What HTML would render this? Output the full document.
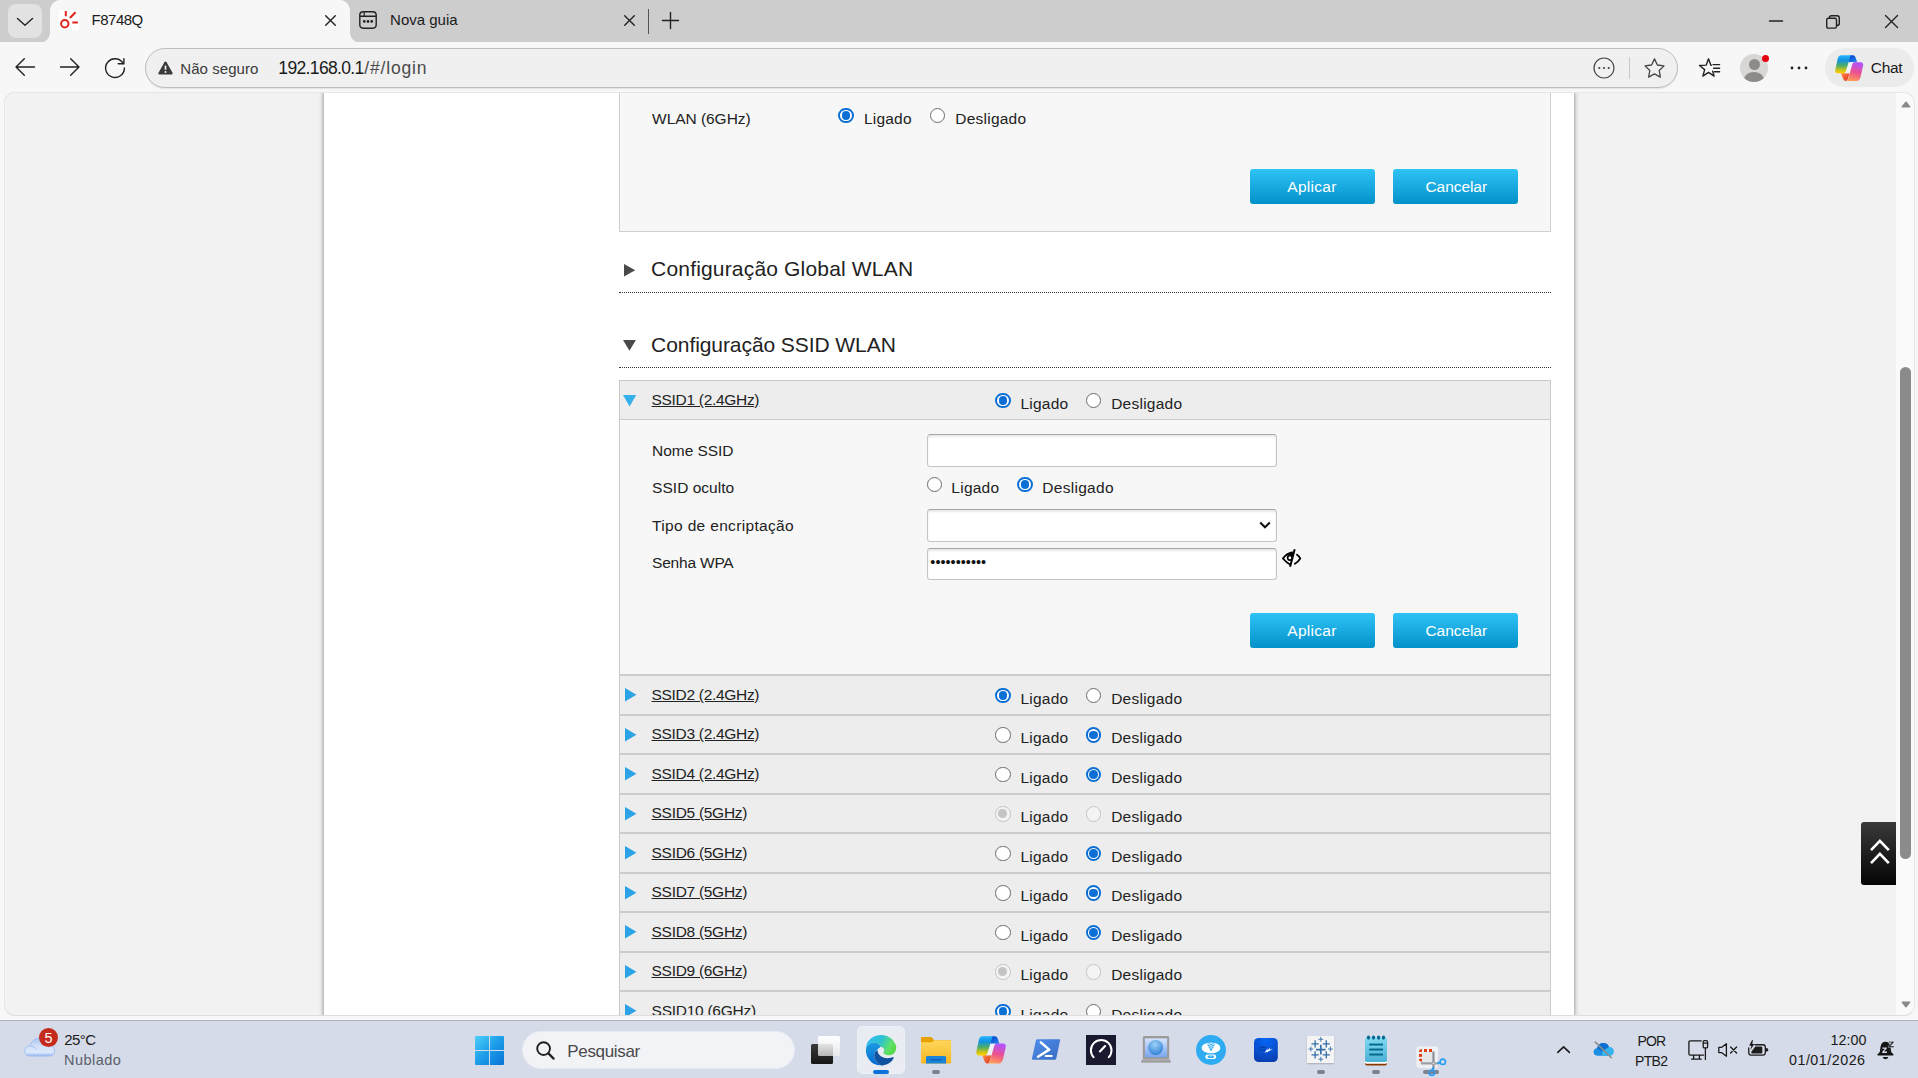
<!DOCTYPE html>
<html lang="pt-BR">
<head>
<meta charset="utf-8">
<title>F8748Q</title>
<style>
*{box-sizing:border-box;margin:0;padding:0}
html,body{width:1918px;height:1078px;overflow:hidden}
body{position:relative;background:#f7f7f7;font-family:"Liberation Sans",sans-serif;color:#222;font-size:16px}
.abs{position:absolute}
svg{position:absolute;overflow:visible}
.t{position:absolute;white-space:nowrap;line-height:1;transform-origin:0 50%}
/* ---------- browser chrome ---------- */
#tabstrip{left:0;top:0;width:1918px;height:42.7px;background:#cdcdcd}
#tabdrop{left:8px;top:4px;width:34px;height:34px;border-radius:8px;background:#e2e2e2}
#tab1{left:50px;top:0;width:300px;height:42.7px;background:#f7f7f7;border-radius:10px 10px 0 0}
#tab1:before,#tab1:after{content:"";position:absolute;bottom:0;width:10px;height:10px}
#tab1:before{left:-10px;background:radial-gradient(circle at 0 0,rgba(0,0,0,0) 9.5px,#f7f7f7 10px)}
#tab1:after{right:-10px;background:radial-gradient(circle at 100% 0,rgba(0,0,0,0) 9.5px,#f7f7f7 10px)}
#toolbar{left:0;top:42px;width:1918px;height:50px;background:#f7f7f7}
#addr{left:145px;top:48px;width:1533px;height:40px;border-radius:20px;background:#f0f0f0;border:1px solid #bdbdbd;box-shadow:0 1px 1px rgba(0,0,0,.08)}
#chat{left:1825px;top:48px;width:89px;height:39px;border-radius:20px;background:#ebebeb}
/* ---------- viewport ---------- */
#vp{left:4px;top:92px;width:1911px;height:924px;background:#f2f2f2;border-radius:11px;overflow:hidden}
#vpb{left:4px;top:92px;width:1911px;height:924px;border-radius:11px;border:1px solid #e6e6e6;border-bottom-color:#dedede}
#panel{left:320px;top:0;width:1250px;height:924px;background:#fff;box-shadow:0 0 4px 1px rgba(0,0,0,.35)}
#sbar{left:1892px;top:0;width:19px;height:924px;background:#fafafa}
#thumb{left:1896px;top:275px;width:11px;height:492px;border-radius:6px;background:#8b8b8b}
#totop{left:1857px;top:730px;width:35px;height:63px;border-radius:3px 0 0 3px;background:linear-gradient(#3a3a3a,#040404)}
/* page */
.box{background:#f7f7f7;border:1px solid #cfcfcf}
.btn{position:absolute;width:125px;height:35px;border-radius:3px;background:linear-gradient(#2fc3f7,#0391c9);color:#fff;text-align:center;line-height:35px;font-size:16px}
.row{position:absolute;left:0;width:930px;background:#ededed;border-bottom:1px solid #c9c9c9}
.radio{position:absolute;width:15.5px;height:15.5px;border-radius:50%;border:1.3px solid #6b6b6b;background:#fff}
.radio.on{border:2px solid #0b6fd6}
.radio.on:after{content:"";position:absolute;left:1.45px;top:1.45px;width:8.6px;height:8.6px;border-radius:50%;background:#0b6fd6}
.radio.dis{border:1.3px solid #c4c4c4;background:#f4f4f4}
.radio.dis.on:after{left:2.15px;top:2.15px}
.radio.dis.on:after{background:#c4c4c4}
.inp{position:absolute;width:350px;height:32px;border:1px solid #c4c4c4;border-top-color:#a6a6a6;border-radius:3.5px;background:#fff;box-shadow:inset 0 2px 2px rgba(0,0,0,.09)}
.dot{border-bottom:1px dotted #333}
/* ---------- taskbar ---------- */
#taskbar{left:0;top:1020px;width:1918px;height:58px;background:#d5dbe8;border-top:1px solid #a9aeb9}
#tbline{left:0;top:1019px;width:1918px;height:1px;background:#fdfdfd}
#search{left:522px;top:1030.6px;width:273px;height:38.6px;border-radius:19.3px;background:#f1f3f7;border:1px solid #e9ecf2}
</style>
</head>
<body>
<!-- TABSTRIP -->
<div id="tabstrip" class="abs"></div>
<div id="tabdrop" class="abs"></div>
<div id="tab1" class="abs"></div>
<div id="toolbar" class="abs"></div>
<div id="addr" class="abs"></div>
<div id="chat" class="abs"></div>
<svg style="left:17px;top:18px" width="16" height="8"><path d="M0.5 0.5 L8 7.3 L15.5 0.5" fill="none" stroke="#222" stroke-width="1.4" stroke-linecap="round" stroke-linejoin="round"/></svg>
<div class="abs" style="left:59px;top:10px;width:20px;height:20px;background:#fff"></div>
<svg style="left:59px;top:10px" width="20" height="20"><g fill="none" stroke="#e0231c" stroke-width="2"><circle cx="5.8" cy="13.7" r="3.7"/><path d="M6.8 1 V6.2 M10.9 8 L16.5 2.2 M13.3 12.5 H18.9"/></g></svg>
<div class="t " style="left:91.58px;top:12.00px;font-size:15.00px;color:#1b1b1b;letter-spacing:-0.512px;">F8748Q</div>
<svg style="left:325.2px;top:15px" width="11" height="11"><path d="M0.7 0.7 L10.3 10.3 M10.3 0.7 L0.7 10.3" fill="none" stroke="#222" stroke-width="1.4" stroke-linecap="round" stroke-linejoin="round"/></svg>
<svg style="left:359px;top:11px" width="18" height="18"><g fill="none" stroke="#222" stroke-width="1.4" stroke-linecap="round" stroke-linejoin="round" stroke-width="1.6"><rect x="0.8" y="0.8" width="16.4" height="16.4" rx="3.4"/><path d="M0.8 5.2 H17.2"/><path d="M5.2 0.8 V5.2" stroke-width="1.2"/></g><g fill="#222"><circle cx="5.3" cy="10.4" r="1.35"/><circle cx="9" cy="10.4" r="1.35"/><circle cx="12.7" cy="10.4" r="1.35"/></g></svg>
<div class="t " style="left:390.07px;top:12.00px;font-size:15.00px;color:#1b1b1b;letter-spacing:-0.002px;">Nova guia</div>
<svg style="left:624px;top:15px" width="11" height="11"><path d="M0.7 0.7 L10.3 10.3 M10.3 0.7 L0.7 10.3" fill="none" stroke="#222" stroke-width="1.4" stroke-linecap="round" stroke-linejoin="round"/></svg>
<div class="abs" style="left:648px;top:9px;width:1px;height:25px;background:#555"></div>
<svg style="left:662px;top:12px" width="17" height="17"><path d="M8.5 0.5 V16.5 M0.5 8.5 H16.5" fill="none" stroke="#222" stroke-width="1.4" stroke-linecap="round" stroke-linejoin="round"/></svg>
<svg style="left:1769px;top:20px" width="14" height="2"><path d="M0.5 1 H13.5" fill="none" stroke="#222" stroke-width="1.4" stroke-linecap="round" stroke-linejoin="round" stroke-width="1.15"/></svg>
<svg style="left:1826px;top:15px" width="14" height="14"><g fill="none" stroke="#222" stroke-width="1.4" stroke-linecap="round" stroke-linejoin="round" stroke-width="1.2"><rect x="0.7" y="3.3" width="9.8" height="9.8" rx="1.6"/><path d="M3.4 3 V2.6 Q3.4 0.7 5.4 0.7 H11 Q13.3 0.7 13.3 3 V8.6 Q13.3 10.4 11 10.5"/></g></svg>
<svg style="left:1885px;top:15px" width="13" height="13"><path d="M0.5 0.5 L12.5 12.5 M12.5 0.5 L0.5 12.5" fill="none" stroke="#222" stroke-width="1.4" stroke-linecap="round" stroke-linejoin="round" stroke-width="1.2"/></svg>
<svg style="left:15px;top:58px" width="20" height="18"><path d="M19.5 9 H1 M9.3 0.7 L1 9 L9.3 17.3" fill="none" stroke="#222" stroke-width="1.4" stroke-linecap="round" stroke-linejoin="round"/></svg>
<svg style="left:60px;top:58px" width="20" height="18"><path d="M0.5 9 H19 M10.7 0.7 L19 9 L10.7 17.3" fill="none" stroke="#222" stroke-width="1.4" stroke-linecap="round" stroke-linejoin="round"/></svg>
<svg style="left:105px;top:57px" width="21" height="22"><path d="M19.4 11 A9.4 9.4 0 1 1 18.3 6.7" fill="none" stroke="#222" stroke-width="1.4" stroke-linecap="round" stroke-linejoin="round"/><path d="M13.2 6.8 H18.9 V1.7" fill="none" stroke="#222" stroke-width="1.4" stroke-linecap="round" stroke-linejoin="round"/></svg>
<svg style="left:157.6px;top:60.6px" width="15" height="14"><path d="M7.5 0.6 Q8.2 0.6 8.6 1.3 L14.6 12 Q15 13.4 13.6 13.4 H1.4 Q0 13.4 0.4 12 L6.4 1.3 Q6.8 0.6 7.5 0.6Z" fill="#3b3b3b"/><path d="M7.5 4.6 V8.8" stroke="#f0f0f0" stroke-width="1.7"/><circle cx="7.5" cy="11" r="1" fill="#f0f0f0"/></svg>
<div class="t " style="left:180.28px;top:61.00px;font-size:15.00px;color:#3a3a3a;letter-spacing:0.068px;">Não seguro</div>
<div class="t " style="left:278.34px;top:60.00px;font-size:17.50px;color:#1a1a1a;letter-spacing:-0.648px;">192.168.0.1</div>
<div class="t " style="left:364.34px;top:60.00px;font-size:17.50px;color:#4a4a4a;letter-spacing:0.811px;">/#/login</div>
<svg style="left:1593px;top:57px" width="22" height="22"><circle cx="11" cy="11" r="10" fill="none" stroke="#444" stroke-width="1.2"/><g fill="#444"><circle cx="6.3" cy="11" r="1.1"/><circle cx="11" cy="11" r="1.1"/><circle cx="15.7" cy="11" r="1.1"/></g></svg>
<div class="abs" style="left:1629px;top:57px;width:1px;height:22px;background:#c8c8c8"></div>
<svg style="left:1644px;top:58px" width="21" height="20"><path d="M10.5 0.9 L13.4 7 L20 7.9 L15.2 12.5 L16.4 19.1 L10.5 15.9 L4.6 19.1 L5.8 12.5 L1 7.9 L7.6 7Z" fill="none" stroke="#444" stroke-width="1.3" stroke-linejoin="round"/></svg>
<svg style="left:1698.6px;top:58.4px" width="22" height="20"><path d="M12.4 7.2 L11.85 7.16 L9.5 0.8 L7.15 7.16 L0.5 7.5 L5.7 11.64 L3.86 18.1 L9.5 14.4 L15.1 18.1 L13.7 13.2" fill="none" stroke="#222" stroke-width="1.4" stroke-linecap="round" stroke-linejoin="round"/><path d="M14 6.6 H20.6 M14.6 10.2 H20.6 M15.4 13.8 H20.6" fill="none" stroke="#222" stroke-width="1.4" stroke-linecap="round" stroke-linejoin="round"/></svg>
<div class="abs" style="left:1740px;top:54px;width:28px;height:28px;border-radius:50%;background:#d9d7d5;overflow:hidden"><div class="abs" style="left:8.5px;top:4.5px;width:11px;height:11px;border-radius:50%;background:#8e8a87"></div><div class="abs" style="left:4px;top:17.5px;width:20px;height:16px;border-radius:50%;background:#8e8a87"></div></div>
<div class="abs" style="left:1761.5px;top:54.5px;width:7px;height:7px;border-radius:50%;background:#e4000f"></div>
<svg style="left:1790px;top:66px" width="18" height="4"><g fill="#222"><circle cx="2" cy="2" r="1.4"/><circle cx="9" cy="2" r="1.4"/><circle cx="16" cy="2" r="1.4"/></g></svg>
<svg style="left:1834.80px;top:54.70px" width="28.40" height="26.20" viewBox="0 0 30 27.7"><defs><linearGradient id="cls" x1="0" y1="0" x2="0" y2="1"><stop offset="0" stop-color="#25b4fb"/><stop offset=".28" stop-color="#1192e3"/><stop offset=".58" stop-color="#4fae66"/><stop offset=".85" stop-color="#d8c514"/><stop offset="1" stop-color="#ffd000"/></linearGradient><linearGradient id="crs" x1="0.35" y1="0" x2="0.1" y2="1"><stop offset="0" stop-color="#b553f5"/><stop offset=".45" stop-color="#ea5092"/><stop offset=".8" stop-color="#fb8468"/><stop offset="1" stop-color="#ffa84a"/></linearGradient><linearGradient id="cbs" x1="0" y1="0" x2="0.8" y2="1"><stop offset="0" stop-color="#0838d0"/><stop offset="1" stop-color="#1f86e8"/></linearGradient><linearGradient id="cos" x1="0" y1="0" x2="1" y2="0.8"><stop offset="0" stop-color="#ff8c3a"/><stop offset="1" stop-color="#e23a2c"/></linearGradient></defs><path d="M15.6 0.2 H19.4 Q21 0.3 21.9 3 L23.4 7.8 H14.2 Z" fill="url(#cbs)"/><path d="M6.3 19.3 H15.4 L13.4 26 Q12.6 27.8 10.8 27.5 Q9.2 27 8.6 25.2 Z" fill="url(#cos)"/><path d="M14.2 7.7 H19 L15.4 19.3 H10.4 Z" fill="#eef1f7"/><path d="M6.4 0.2 H16.7 L15.2 4.9 L11.2 17.6 Q10.6 19.4 8.6 19.4 H2.9 Q-0.4 19.2 0.3 15.8 L3 3.2 Q3.8 0.3 6.4 0.2Z" fill="url(#cls)"/><path d="M21 7.6 H27 Q30.4 7.8 29.7 11.4 L27 23.2 Q26 27.3 22.8 27.5 H12.4 Q13.4 26.8 14 25 L18.4 9.6 Q19 7.7 21 7.6Z" fill="url(#crs)"/></svg>
<div class="t " style="left:1870.77px;top:60.00px;font-size:15.50px;color:#1b1b1b;letter-spacing:-0.299px;">Chat</div>
<!-- VIEWPORT -->
<div id="vp" class="abs">
  <div id="panel" class="abs"></div>
  <div id="pg" class="abs" style="left:-4px;top:-92px;width:1918px;height:1078px">
<div class="abs box" style="left:619px;top:60px;width:932px;height:172px"></div>
<div class="t " style="left:652.07px;top:111.00px;font-size:15.50px;color:#222;letter-spacing:-0.044px;">WLAN (6GHz)</div>
<div class="radio on" style="left:838.45px;top:107.85px"></div>
<div class="t " style="left:863.97px;top:111.00px;font-size:15.50px;color:#222;letter-spacing:0.200px;">Ligado</div>
<div class="radio" style="left:929.55px;top:107.85px"></div>
<div class="t " style="left:955.27px;top:111.00px;font-size:15.50px;color:#222;letter-spacing:0.235px;">Desligado</div>
<div class="btn" style="left:1250px;top:169px"></div>
<div class="t " style="left:1287.37px;top:179.00px;font-size:15.50px;color:#fff;letter-spacing:0.267px;">Aplicar</div>
<div class="btn" style="left:1393px;top:169px"></div>
<div class="t " style="left:1425.47px;top:179.00px;font-size:15.50px;color:#fff;letter-spacing:-0.061px;">Cancelar</div>
<svg style="left:624.2px;top:264.2px" width="11.2" height="12.5"><path d="M0 0 L11.2 6.25 L0 12.5Z" fill="#4a4a4a"/></svg>
<div class="t " style="left:651.08px;top:258.00px;font-size:21.00px;color:#222;letter-spacing:0.175px;">Configuração Global WLAN</div>
<div class="abs dot" style="left:619px;top:292px;width:932px;height:1px"></div>
<svg style="left:623px;top:340.1px" width="12.9" height="10.8"><path d="M0 0 L12.9 0 L6.45 10.8Z" fill="#4a4a4a"/></svg>
<div class="t " style="left:651.08px;top:334.00px;font-size:21.00px;color:#222;letter-spacing:-0.074px;">Configuração SSID WLAN</div>
<div class="abs dot" style="left:619px;top:367px;width:932px;height:1px"></div>
<div class="abs" style="left:619px;top:380px;width:932px;height:700px;background:#ededed;border:1px solid #c9c9c9"></div>
<svg style="left:623.3px;top:394.8px" width="13.2" height="11.5"><path d="M0 0 L13.2 0 L6.6 11.5Z" fill="#35b0e8"/></svg>
<div class="t " style="left:651.57px;top:392.00px;font-size:15.50px;color:#222;letter-spacing:-0.309px;text-decoration:underline;text-underline-offset:1px;">SSID1 (2.4GHz)</div>
<div class="radio on" style="left:995.15px;top:392.85px"></div>
<div class="t " style="left:1020.47px;top:396.00px;font-size:15.50px;color:#222;letter-spacing:0.217px;">Ligado</div>
<div class="radio" style="left:1085.55px;top:392.85px"></div>
<div class="t " style="left:1111.17px;top:396.00px;font-size:15.50px;color:#222;letter-spacing:0.246px;">Desligado</div>
<div class="abs" style="left:620px;top:419px;width:930px;height:257px;background:#f7f7f7;border-top:1px solid #cbcbcb;border-bottom:2px solid #cccccc"></div>
<div class="t " style="left:652.07px;top:443.00px;font-size:15.50px;color:#222;letter-spacing:-0.043px;">Nome SSID</div>
<div class="inp" style="left:927px;top:434px;height:33px"></div>
<div class="t " style="left:652.07px;top:480.00px;font-size:15.50px;color:#222;letter-spacing:0.027px;">SSID oculto</div>
<div class="radio" style="left:926.55px;top:476.85px"></div>
<div class="t " style="left:951.37px;top:480.00px;font-size:15.50px;color:#222;letter-spacing:0.234px;">Ligado</div>
<div class="radio on" style="left:1017.25px;top:476.85px"></div>
<div class="t " style="left:1042.27px;top:480.00px;font-size:15.50px;color:#222;letter-spacing:0.290px;">Desligado</div>
<div class="t " style="left:652.07px;top:518.00px;font-size:15.50px;color:#222;letter-spacing:0.336px;">Tipo de encriptação</div>
<div class="inp" style="left:927px;top:509px;height:33px"></div>
<svg style="left:1259px;top:521px" width="12" height="8"><path d="M1.2 1.5 L6 6.3 L10.8 1.5" fill="none" stroke="#111" stroke-width="2"/></svg>
<div class="t " style="left:652.07px;top:555.00px;font-size:15.50px;color:#222;letter-spacing:-0.204px;">Senha WPA</div>
<div class="inp" style="left:927px;top:548px"></div>
<div class="t" style="left:930.3px;top:555.2px;font-size:14.4px;letter-spacing:0.04px;color:#111">•••••••••••</div>
<svg style="left:1281.9px;top:548.9px" width="19" height="18" viewBox="0 0 19 18"><g fill="none" stroke="#000" stroke-width="1.75"><path d="M10.6 3.1 Q4.6 4.4 0.9 9.5 Q4.4 13.6 8.4 15.7"/><path d="M14.4 5.2 Q17 7 18.3 9.5 Q16.2 13 12.3 15.2" stroke-width="1.7"/><path d="M12.7 0.2 L8.1 17.8" stroke-width="2"/><circle cx="7.9" cy="8.8" r="2.3" stroke-width="1.6"/></g><path d="M5.2 6.6 Q7.6 3.4 11.6 3.2 L10.6 7.4 Q8 4.6 5.2 6.6Z" fill="#000"/></svg>
<div class="btn" style="left:1250px;top:613px"></div>
<div class="t " style="left:1287.37px;top:623.00px;font-size:15.50px;color:#fff;letter-spacing:0.267px;">Aplicar</div>
<div class="btn" style="left:1393px;top:613px"></div>
<div class="t " style="left:1425.47px;top:623.00px;font-size:15.50px;color:#fff;letter-spacing:-0.061px;">Cancelar</div>
<svg style="left:625px;top:688.00px" width="11.4" height="13.4"><path d="M0 0 L11.4 6.7 L0 13.4Z" fill="#2ba3e6"/></svg>
<div class="t " style="left:651.57px;top:687.00px;font-size:15.50px;color:#222;letter-spacing:-0.309px;text-decoration:underline;text-underline-offset:1px;">SSID2 (2.4GHz)</div>
<div class="radio on" style="left:995.15px;top:687.85px"></div>
<div class="t " style="left:1020.47px;top:691.00px;font-size:15.50px;color:#222;letter-spacing:0.217px;">Ligado</div>
<div class="radio" style="left:1085.55px;top:687.85px"></div>
<div class="t " style="left:1111.17px;top:691.00px;font-size:15.50px;color:#222;letter-spacing:0.246px;">Desligado</div>
<div class="abs" style="left:620px;top:714px;width:930px;height:2px;background:#cccccc"></div>
<svg style="left:625px;top:727.50px" width="11.4" height="13.4"><path d="M0 0 L11.4 6.7 L0 13.4Z" fill="#2ba3e6"/></svg>
<div class="t " style="left:651.57px;top:726.00px;font-size:15.50px;color:#222;letter-spacing:-0.309px;text-decoration:underline;text-underline-offset:1px;">SSID3 (2.4GHz)</div>
<div class="radio" style="left:995.15px;top:727.35px"></div>
<div class="t " style="left:1020.47px;top:730.00px;font-size:15.50px;color:#222;letter-spacing:0.217px;">Ligado</div>
<div class="radio on" style="left:1085.55px;top:727.35px"></div>
<div class="t " style="left:1111.17px;top:730.00px;font-size:15.50px;color:#222;letter-spacing:0.246px;">Desligado</div>
<div class="abs" style="left:620px;top:753px;width:930px;height:2px;background:#cccccc"></div>
<svg style="left:625px;top:767.00px" width="11.4" height="13.4"><path d="M0 0 L11.4 6.7 L0 13.4Z" fill="#2ba3e6"/></svg>
<div class="t " style="left:651.57px;top:766.00px;font-size:15.50px;color:#222;letter-spacing:-0.309px;text-decoration:underline;text-underline-offset:1px;">SSID4 (2.4GHz)</div>
<div class="radio" style="left:995.15px;top:766.85px"></div>
<div class="t " style="left:1020.47px;top:770.00px;font-size:15.50px;color:#222;letter-spacing:0.217px;">Ligado</div>
<div class="radio on" style="left:1085.55px;top:766.85px"></div>
<div class="t " style="left:1111.17px;top:770.00px;font-size:15.50px;color:#222;letter-spacing:0.246px;">Desligado</div>
<div class="abs" style="left:620px;top:793px;width:930px;height:2px;background:#cccccc"></div>
<svg style="left:625px;top:806.50px" width="11.4" height="13.4"><path d="M0 0 L11.4 6.7 L0 13.4Z" fill="#2ba3e6"/></svg>
<div class="t " style="left:651.57px;top:805.00px;font-size:15.50px;color:#222;letter-spacing:-0.292px;text-decoration:underline;text-underline-offset:1px;">SSID5 (5GHz)</div>
<div class="radio on dis" style="left:995.15px;top:806.35px"></div>
<div class="t " style="left:1020.47px;top:809.00px;font-size:15.50px;color:#222;letter-spacing:0.217px;">Ligado</div>
<div class="radio dis" style="left:1085.55px;top:806.35px"></div>
<div class="t " style="left:1111.17px;top:809.00px;font-size:15.50px;color:#222;letter-spacing:0.246px;">Desligado</div>
<div class="abs" style="left:620px;top:832px;width:930px;height:2px;background:#cccccc"></div>
<svg style="left:625px;top:846.00px" width="11.4" height="13.4"><path d="M0 0 L11.4 6.7 L0 13.4Z" fill="#2ba3e6"/></svg>
<div class="t " style="left:651.57px;top:845.00px;font-size:15.50px;color:#222;letter-spacing:-0.292px;text-decoration:underline;text-underline-offset:1px;">SSID6 (5GHz)</div>
<div class="radio" style="left:995.15px;top:845.85px"></div>
<div class="t " style="left:1020.47px;top:849.00px;font-size:15.50px;color:#222;letter-spacing:0.217px;">Ligado</div>
<div class="radio on" style="left:1085.55px;top:845.85px"></div>
<div class="t " style="left:1111.17px;top:849.00px;font-size:15.50px;color:#222;letter-spacing:0.246px;">Desligado</div>
<div class="abs" style="left:620px;top:872px;width:930px;height:2px;background:#cccccc"></div>
<svg style="left:625px;top:885.50px" width="11.4" height="13.4"><path d="M0 0 L11.4 6.7 L0 13.4Z" fill="#2ba3e6"/></svg>
<div class="t " style="left:651.57px;top:884.00px;font-size:15.50px;color:#222;letter-spacing:-0.292px;text-decoration:underline;text-underline-offset:1px;">SSID7 (5GHz)</div>
<div class="radio" style="left:995.15px;top:885.35px"></div>
<div class="t " style="left:1020.47px;top:888.00px;font-size:15.50px;color:#222;letter-spacing:0.217px;">Ligado</div>
<div class="radio on" style="left:1085.55px;top:885.35px"></div>
<div class="t " style="left:1111.17px;top:888.00px;font-size:15.50px;color:#222;letter-spacing:0.246px;">Desligado</div>
<div class="abs" style="left:620px;top:911px;width:930px;height:2px;background:#cccccc"></div>
<svg style="left:625px;top:925.00px" width="11.4" height="13.4"><path d="M0 0 L11.4 6.7 L0 13.4Z" fill="#2ba3e6"/></svg>
<div class="t " style="left:651.57px;top:924.00px;font-size:15.50px;color:#222;letter-spacing:-0.292px;text-decoration:underline;text-underline-offset:1px;">SSID8 (5GHz)</div>
<div class="radio" style="left:995.15px;top:924.85px"></div>
<div class="t " style="left:1020.47px;top:928.00px;font-size:15.50px;color:#222;letter-spacing:0.217px;">Ligado</div>
<div class="radio on" style="left:1085.55px;top:924.85px"></div>
<div class="t " style="left:1111.17px;top:928.00px;font-size:15.50px;color:#222;letter-spacing:0.246px;">Desligado</div>
<div class="abs" style="left:620px;top:951px;width:930px;height:2px;background:#cccccc"></div>
<svg style="left:625px;top:964.50px" width="11.4" height="13.4"><path d="M0 0 L11.4 6.7 L0 13.4Z" fill="#2ba3e6"/></svg>
<div class="t " style="left:651.57px;top:963.00px;font-size:15.50px;color:#222;letter-spacing:-0.292px;text-decoration:underline;text-underline-offset:1px;">SSID9 (6GHz)</div>
<div class="radio on dis" style="left:995.15px;top:964.35px"></div>
<div class="t " style="left:1020.47px;top:967.00px;font-size:15.50px;color:#222;letter-spacing:0.217px;">Ligado</div>
<div class="radio dis" style="left:1085.55px;top:964.35px"></div>
<div class="t " style="left:1111.17px;top:967.00px;font-size:15.50px;color:#222;letter-spacing:0.246px;">Desligado</div>
<div class="abs" style="left:620px;top:990px;width:930px;height:2px;background:#cccccc"></div>
<svg style="left:625px;top:1004.00px" width="11.4" height="13.4"><path d="M0 0 L11.4 6.7 L0 13.4Z" fill="#2ba3e6"/></svg>
<div class="t " style="left:651.57px;top:1003.00px;font-size:15.50px;color:#222;letter-spacing:-0.263px;text-decoration:underline;text-underline-offset:1px;">SSID10 (6GHz)</div>
<div class="radio on" style="left:995.15px;top:1003.85px"></div>
<div class="t " style="left:1020.47px;top:1007.00px;font-size:15.50px;color:#222;letter-spacing:0.217px;">Ligado</div>
<div class="radio" style="left:1085.55px;top:1003.85px"></div>
<div class="t " style="left:1111.17px;top:1007.00px;font-size:15.50px;color:#222;letter-spacing:0.246px;">Desligado</div>
</div>
  <div id="totop" class="abs"><svg style="left:9px;top:17px" width="20" height="26"><path d="M1 11.2 L9.9 1.8 L18.8 11.2 M1 24.2 L9.9 14.8 L18.8 24.2" fill="none" stroke="#fff" stroke-width="2.6"/></svg></div>
  <div id="sbar" class="abs"></div>
  <div id="thumb" class="abs"></div>
  <svg style="left:1897px;top:9px" width="10" height="7"><path d="M5 0.6 Q5.6 0.6 6 1.2 L9.4 5.4 Q9.8 6.6 8.6 6.6 H1.4 Q0.2 6.6 0.6 5.4 L4 1.2 Q4.4 0.6 5 0.6Z" fill="#8b8b8b"/></svg>
  <svg style="left:1897px;top:909px" width="10" height="7"><path d="M5 6.4 Q5.6 6.4 6 5.8 L9.4 1.6 Q9.8 0.4 8.6 0.4 H1.4 Q0.2 0.4 0.6 1.6 L4 5.8 Q4.4 6.4 5 6.4Z" fill="#8b8b8b"/></svg>
</div>
<div id="vpb" class="abs"></div>
<!-- TASKBAR -->
<div id="tbline" class="abs"></div>
<div id="taskbar" class="abs"></div>
<div id="search" class="abs"></div>
<svg style="left:24px;top:1037px" width="32" height="20" viewBox="0 0 32 20"><defs><linearGradient id="wc" x1="0" y1="0" x2="0" y2="1"><stop offset="0" stop-color="#a6c4f4"/><stop offset=".45" stop-color="#d3e2f9"/><stop offset=".8" stop-color="#dbe8fb"/><stop offset="1" stop-color="#94b5ef"/></linearGradient></defs><path d="M6.5 19.1 Q0.8 19.1 0.8 13.8 Q1 8.8 6.3 8.6 Q8.6 0.8 16.5 0.9 Q23.5 1.2 25.4 8.2 Q30.5 8.8 30.6 13.8 Q30.4 19 25 19.1Z" fill="url(#wc)" stroke="#9dbbf1" stroke-width="0.9"/><path d="M6.4 9.2 Q10.6 9 12.4 12.4" fill="none" stroke="#9dbbf1" stroke-width="0.9"/></svg>
<div class="abs" style="left:38.5px;top:1027.9px;width:19.4px;height:19.4px;border-radius:50%;background:#c42b1c"></div>
<div class="t " style="left:44.48px;top:1031.00px;font-size:14.50px;color:#fff;letter-spacing:-0.656px;">5</div>
<div class="t " style="left:64.18px;top:1032.00px;font-size:15.00px;color:#1a1a1a;letter-spacing:-0.572px;">25°C</div>
<div class="t " style="left:64.08px;top:1053.00px;font-size:14.50px;color:#5b606b;letter-spacing:0.471px;">Nublado</div>
<svg style="left:475px;top:1036px" width="29" height="29"><defs><linearGradient id="wl" x1="0" y1="0" x2="1" y2="1"><stop offset="0" stop-color="#4fd0fb"/><stop offset=".5" stop-color="#1b9ce8"/><stop offset="1" stop-color="#0a74d6"/></linearGradient></defs><path d="M1 0 H14 V14 H0 V1 Q0 0 1 0Z M15 0 H28 Q29 0 29 1 V14 H15Z M0 15 H14 V29 H1 Q0 29 0 28Z M15 15 H29 V28 Q29 29 28 29 H15Z" fill="url(#wl)"/></svg>
<svg style="left:535.5px;top:1040.5px" width="19" height="19"><circle cx="7.6" cy="7.6" r="6.4" fill="none" stroke="#1f1f1f" stroke-width="1.9"/><path d="M12.4 12.4 L17.6 17.6" stroke="#1f1f1f" stroke-width="2.2" stroke-linecap="round"/></svg>
<div class="t " style="left:567.25px;top:1043.00px;font-size:17.00px;color:#4a4a4a;letter-spacing:-0.322px;">Pesquisar</div>
<div class="abs" style="left:810.8px;top:1043.9px;width:22.1px;height:19.8px;border-radius:1.5px;background:linear-gradient(#3a3a3a,#161616)"></div>
<div class="abs" style="left:817.9px;top:1036.2px;width:22.1px;height:19.6px;border-radius:1.5px;background:linear-gradient(rgba(255,255,255,.98),rgba(238,238,238,.72))"></div>
<div class="abs" style="left:856.7px;top:1025.8px;width:48.2px;height:48.7px;border-radius:5px;background:#e9edf3;border:1px solid #eef1f6"></div>
<svg style="left:865.9px;top:1034.6px" width="30.3" height="30.4" viewBox="0 0 30.3 30.4"><defs><linearGradient id="eg1" x1="0" y1="0.2" x2="1" y2="0.6"><stop offset="0" stop-color="#35b8f5"/><stop offset=".45" stop-color="#2cc3d0"/><stop offset=".8" stop-color="#5fe06a"/><stop offset="1" stop-color="#55d848"/></linearGradient><linearGradient id="eg2" x1="0.3" y1="0" x2="0.5" y2="1"><stop offset="0" stop-color="#1b9de2"/><stop offset="1" stop-color="#0669d4"/></linearGradient></defs><path d="M0.19 12.80 C0.00 12.49 0.65 9.18 1.48 7.61 C2.32 6.03 3.77 4.48 5.19 3.34 C6.62 2.20 8.35 1.30 10.02 0.74 C11.69 0.19 13.42 -0.03 15.21 0.00 C17.01 0.03 18.99 0.22 20.78 0.93 C22.57 1.64 24.55 2.91 25.97 4.27 C27.40 5.63 28.60 7.61 29.31 9.09 C30.02 10.58 30.36 11.75 30.24 13.17 C30.12 14.59 29.22 16.57 28.57 17.63 C27.92 18.68 27.15 19.05 26.35 19.48 C25.54 19.91 24.86 20.19 23.75 20.22 C22.63 20.25 20.78 20.04 19.67 19.67 C18.55 19.29 17.50 18.27 17.07 18.00 C16.64 17.72 16.88 18.43 17.07 18.00 C17.25 17.56 18.18 16.26 18.18 15.40 C18.18 14.53 17.63 13.42 17.07 12.80 C16.51 12.18 15.21 11.87 14.84 11.69 C14.47 11.50 15.34 12.18 14.84 11.69 C14.35 11.19 13.17 9.40 11.87 8.72 C10.58 8.04 8.60 7.48 7.05 7.61 C5.50 7.73 3.74 8.60 2.60 9.46 C1.45 10.33 0.37 13.11 0.19 12.80Z" fill="url(#eg1)"/><path d="M0.19 12.80 C0.22 12.06 -0.22 13.36 0.19 12.80 C0.59 12.24 1.45 10.33 2.60 9.46 C3.74 8.60 5.50 7.73 7.05 7.61 C8.60 7.48 10.58 8.04 11.87 8.72 C13.17 9.40 14.35 11.19 14.84 11.69 C15.34 12.18 15.34 11.32 14.84 11.69 C14.35 12.06 12.86 12.93 11.87 13.91 C10.88 14.90 9.49 16.26 8.91 17.63 C8.32 18.99 8.04 20.53 8.35 22.08 C8.66 23.62 9.68 25.54 10.76 26.90 C11.84 28.26 14.16 29.68 14.84 30.24 C15.52 30.80 15.58 30.33 14.84 30.24 C14.10 30.15 12.00 30.24 10.39 29.68 C8.78 29.13 6.68 28.17 5.19 26.90 C3.71 25.63 2.35 23.69 1.48 22.08 C0.62 20.47 0.22 18.80 0.00 17.25 C-0.22 15.71 0.15 13.54 0.19 12.80Z" fill="url(#eg2)"/><path d="M11.50 14.66 C11.94 14.16 11.38 14.04 11.50 14.66 C11.63 15.28 11.69 17.25 12.24 18.37 C12.80 19.48 13.67 20.56 14.84 21.34 C16.02 22.11 17.81 22.73 19.29 23.01 C20.78 23.28 22.51 23.13 23.75 23.01 C24.98 22.88 26.00 22.29 26.72 22.26 C27.43 22.23 27.80 22.73 28.01 22.82 C28.23 22.91 28.42 22.26 28.01 22.82 C27.61 23.38 26.69 25.11 25.60 26.16 C24.52 27.21 22.94 28.42 21.52 29.13 C20.10 29.84 18.18 30.24 17.07 30.43 C15.96 30.61 15.89 30.83 14.84 30.24 C13.79 29.65 11.84 28.26 10.76 26.90 C9.68 25.54 8.66 23.62 8.35 22.08 C8.04 20.53 8.38 18.86 8.91 17.63 C9.43 16.39 11.07 15.15 11.50 14.66Z" fill="#10539e"/></svg>
<div class="abs" style="left:872.6px;top:1070.2px;width:16.8px;height:3.7px;border-radius:2px;background:#0a72d8"></div>
<svg style="left:920.9px;top:1036.8px" width="30.1" height="26.6" viewBox="0 0 30.1 26.6"><defs><linearGradient id="fg" x1="0" y1="0" x2="0" y2="1"><stop offset="0" stop-color="#ffd75e"/><stop offset="1" stop-color="#f7b61f"/></linearGradient></defs><path d="M1 0 H9.6 Q10.6 0 11.4 0.9 L13 3 H29 Q30.1 3 30.1 4 V8 H0 V1 Q0 0 1 0Z" fill="#e6a100"/><path d="M0 5.2 H11 L13.2 3.2 H29 Q30.1 3.2 30.1 4.2 V25.6 Q30.1 26.6 29 26.6 H1 Q0 26.6 0 25.6Z" fill="url(#fg)"/><path d="M5 26.6 V20.6 Q5 19 6.6 19 H23.5 Q25.1 19 25.1 20.6 V26.6Z" fill="#1784d9"/><path d="M9 22.7 H21.2" stroke="#0f5fb0" stroke-width="1.3"/></svg>
<div class="abs" style="left:931.9px;top:1070.2px;width:8.1px;height:3.7px;border-radius:2px;background:#7d828c"></div>
<svg style="left:976.00px;top:1035.60px" width="30.00" height="27.70" viewBox="0 0 30 27.7"><defs><linearGradient id="clb" x1="0" y1="0" x2="0" y2="1"><stop offset="0" stop-color="#25b4fb"/><stop offset=".28" stop-color="#1192e3"/><stop offset=".58" stop-color="#4fae66"/><stop offset=".85" stop-color="#d8c514"/><stop offset="1" stop-color="#ffd000"/></linearGradient><linearGradient id="crb" x1="0.35" y1="0" x2="0.1" y2="1"><stop offset="0" stop-color="#b553f5"/><stop offset=".45" stop-color="#ea5092"/><stop offset=".8" stop-color="#fb8468"/><stop offset="1" stop-color="#ffa84a"/></linearGradient><linearGradient id="cbb" x1="0" y1="0" x2="0.8" y2="1"><stop offset="0" stop-color="#0838d0"/><stop offset="1" stop-color="#1f86e8"/></linearGradient><linearGradient id="cob" x1="0" y1="0" x2="1" y2="0.8"><stop offset="0" stop-color="#ff8c3a"/><stop offset="1" stop-color="#e23a2c"/></linearGradient></defs><path d="M15.6 0.2 H19.4 Q21 0.3 21.9 3 L23.4 7.8 H14.2 Z" fill="url(#cbb)"/><path d="M6.3 19.3 H15.4 L13.4 26 Q12.6 27.8 10.8 27.5 Q9.2 27 8.6 25.2 Z" fill="url(#cob)"/><path d="M14.2 7.7 H19 L15.4 19.3 H10.4 Z" fill="#eef1f7"/><path d="M6.4 0.2 H16.7 L15.2 4.9 L11.2 17.6 Q10.6 19.4 8.6 19.4 H2.9 Q-0.4 19.2 0.3 15.8 L3 3.2 Q3.8 0.3 6.4 0.2Z" fill="url(#clb)"/><path d="M21 7.6 H27 Q30.4 7.8 29.7 11.4 L27 23.2 Q26 27.3 22.8 27.5 H12.4 Q13.4 26.8 14 25 L18.4 9.6 Q19 7.7 21 7.6Z" fill="url(#crb)"/></svg>
<svg style="left:1031px;top:1039px" width="30" height="21" viewBox="0 0 30 21"><defs><linearGradient id="ps" x1="0" y1="0" x2="1" y2="1"><stop offset="0" stop-color="#4f8feb"/><stop offset="1" stop-color="#376ac2"/></linearGradient></defs><path d="M6.4 0.2 H28.4 Q29.4 0.2 29.1 1.2 L25.2 19.8 Q25 20.7 24 20.7 H1.6 Q0.6 20.7 0.9 19.7 L5 1.1 Q5.2 0.2 6.4 0.2Z" fill="url(#ps)"/><path d="M9.8 3.4 L18.2 10.6 L7 17.8" fill="none" stroke="#fff" stroke-width="2.5" stroke-linecap="round" stroke-linejoin="round"/><path d="M14.7 17.1 H20.8" stroke="#fff" stroke-width="2" stroke-linecap="round"/></svg>
<div class="abs" style="left:1085.9px;top:1035.2px;width:30.1px;height:29.8px;background:#191a30"></div>
<svg style="left:1085.9px;top:1035.2px" width="30.1" height="29.8"><path d="M7.6 22.2 A10.3 10.3 0 1 1 22.8 22.2" fill="none" stroke="#fff" stroke-width="2" stroke-linecap="round"/><path d="M13.9 16.4 L19.1 11.1" stroke="#fff" stroke-width="2.2" stroke-linecap="round"/></svg>
<svg style="left:1141px;top:1036px" width="30" height="27" viewBox="0 0 30 27"><defs><linearGradient id="ls" x1="0" y1="0" x2="0" y2="1"><stop offset="0" stop-color="#d4e3ff"/><stop offset="1" stop-color="#78a6ee"/></linearGradient><radialGradient id="lg" cx="0.45" cy="0.3" r="0.7"><stop offset="0" stop-color="#9fd2f8"/><stop offset="1" stop-color="#3380d6"/></radialGradient><linearGradient id="lb" x1="0" y1="0" x2="0" y2="1"><stop offset="0" stop-color="#b5b5b5"/><stop offset="1" stop-color="#8e8e8e"/></linearGradient></defs><rect x="1.8" y="0.1" width="26.4" height="23.6" rx="1.6" fill="#9b9b9b"/><rect x="3.9" y="2.4" width="22.2" height="18.8" fill="url(#ls)"/><path d="M1 23.2 H29 L29.8 25.4 Q30 26.6 28.8 26.6 H1.2 Q0 26.6 0.2 25.4Z" fill="url(#lb)"/><circle cx="14.6" cy="11.5" r="7.5" fill="url(#lg)"/></svg>
<svg style="left:1195.9px;top:1035px" width="30" height="30" viewBox="0 0 30 30"><circle cx="15" cy="15" r="15" fill="#2fabf1"/><ellipse cx="15" cy="12.9" rx="9.4" ry="5.4" fill="#fff"/><path d="M11 9.2 Q15 6.4 19 9.2 L15 16.6Z" fill="#2fabf1"/><path d="M11.6 9.6 Q15 7.4 18.4 9.6 M12.6 11.4 Q15 9.9 17.4 11.4 M13.6 13.2 Q15 12.3 16.4 13.2" fill="none" stroke="#fff" stroke-width="0.9"/><rect x="9.3" y="19.4" width="10.9" height="4.6" rx="2.3" fill="#fff"/><rect x="11.6" y="20.5" width="6.3" height="2.4" rx="1.2" fill="#2fabf1"/><path d="M13.4 20.9 L16 21.7 L14.6 22.1Z" fill="#fff"/></svg>
<svg style="left:1254.2px;top:1037.8px" width="23.8" height="24" viewBox="0 0 23.8 24"><defs><radialGradient id="bq" cx="0.5" cy="0.1" r="0.9"><stop offset="0" stop-color="#0566f6"/><stop offset="1" stop-color="#0a3fb2"/></radialGradient></defs><rect width="23.8" height="24" rx="4.6" fill="url(#bq)"/><path d="M5 10.6 Q8.4 8 11.8 10 M6.2 12.8 Q8.6 11 11 12.4" fill="none" stroke="#083a9c" stroke-width="1.1"/><path d="M10.4 15 L13.8 10 L13.2 12.4 L16.6 9.4 L15.6 11.8 L19.2 10.8 L14.6 13.6 L15.4 12.6 L12.6 14.8 L13.2 13.4Z" fill="#fff"/></svg>
<div class="abs" style="left:1306.6px;top:1035.7px;width:27.6px;height:27.7px;background:#f4f4f4;box-shadow:0 1px 1.5px rgba(0,0,0,.22)"></div>
<svg style="left:1306.6px;top:1035.7px" width="27.6" height="27.7"><g stroke="#336fab" fill="none"><path d="M9.0 13.6 H18.6 M13.8 8.8 V18.4" stroke-width="1.7"/><path d="M4.5 7.8 H11.7 M8.1 4.2 V11.4" stroke-width="1.3"/><path d="M15.7 7.8 H22.9 M19.3 4.2 V11.4" stroke-width="1.3"/><path d="M4.5 18.9 H11.7 M8.1 15.3 V22.5" stroke-width="1.3"/><path d="M15.7 18.9 H22.9 M19.3 15.3 V22.5" stroke-width="1.3"/><path d="M11.4 3.3 H16.2 M13.8 0.9 V5.7" stroke-width="0.9"/><path d="M11.4 23.2 H16.2 M13.8 20.8 V25.6" stroke-width="0.9"/><path d="M1.5 13.0 H6.3 M3.9 10.6 V15.4" stroke-width="0.9"/><path d="M21.0 13.0 H25.8 M23.4 10.6 V15.4" stroke-width="0.9"/></g></svg>
<div class="abs" style="left:1316.9px;top:1070.2px;width:8.0px;height:3.7px;border-radius:2px;background:#7d828c"></div>
<svg style="left:1364px;top:1034.5px" width="24" height="31" viewBox="0 0 24 31"><defs><linearGradient id="np" x1="0" y1="0" x2="0" y2="1"><stop offset="0" stop-color="#82d8f1"/><stop offset="1" stop-color="#49b1d6"/></linearGradient></defs><path d="M1 27 H23 V28.4 Q23 30.4 21 30.4 H3 Q1 30.4 1 28.4Z" fill="#8a3a00"/><path d="M1 26 H23 V27.2 Q23 28.8 21.4 28.8 H2.6 Q1 28.8 1 27.2Z" fill="#fff"/><rect x="1" y="2.6" width="22" height="24.4" rx="1.8" fill="url(#np)"/><g fill="#00688c"><ellipse cx="4.5" cy="2.6" rx="1.6" ry="2.1"/><ellipse cx="9.5" cy="2.6" rx="1.6" ry="2.1"/><ellipse cx="14.6" cy="2.6" rx="1.6" ry="2.1"/><ellipse cx="19.5" cy="2.6" rx="1.6" ry="2.1"/><rect x="5.2" y="8.6" width="13.8" height="1.9"/><rect x="5.2" y="13.6" width="13.8" height="1.9"/><rect x="5.2" y="18.6" width="13.8" height="1.9"/></g></svg>
<div class="abs" style="left:1372.0px;top:1070.2px;width:8.0px;height:3.7px;border-radius:2px;background:#7d828c"></div>
<div class="abs" style="left:1423.0px;top:1070.2px;width:15.7px;height:3.7px;border-radius:2px;background:#7d828c"></div>
<svg style="left:1416px;top:1046px" width="32" height="30" viewBox="0 0 32 30"><rect x="0.4" y="0.3" width="21.6" height="21.6" rx="3" fill="#eef0f3"/><rect x="6" y="6" width="11" height="12" fill="#e6e7e9"/><g fill="#e23c14"><path d="M3 6 Q3 3 6 3 V6Z"/><rect x="8" y="3" width="3" height="3"/><rect x="13" y="3" width="3" height="3"/><rect x="3" y="7.9" width="3" height="3"/><path d="M3 12.7 H6 V15.7 Q3 15.7 3 12.7Z"/></g><path d="M17.5 6.4 V21.5" stroke="#8b9199" stroke-width="2.2" stroke-linecap="round"/><path d="M5.8 17.4 H21.5" stroke="#9aa0a8" stroke-width="2.2" stroke-linecap="round"/><circle cx="17.5" cy="17.4" r="0.8" fill="#dfe2e6"/><path d="M21.5 17.4 L23.6 16.6 M17.5 21.5 L16.6 23.8" stroke="#2a9df4" stroke-width="2.2"/><circle cx="26.8" cy="15.8" r="2.7" fill="none" stroke="#2a9df4" stroke-width="1.6"/><circle cx="15.8" cy="26.7" r="2.7" fill="none" stroke="#2a9df4" stroke-width="1.6"/></svg>
<svg style="left:1556.5px;top:1046px" width="13.2" height="7.2"><path d="M0.8 6.4 L6.6 0.8 L12.4 6.4" fill="none" stroke="#1a1a1a" stroke-linecap="round" stroke-linejoin="round" stroke-width="1.6"/></svg>
<svg style="left:1592.5px;top:1041px" width="21" height="18" viewBox="0 0 21 18"><path d="M5 14.8 Q0.6 14.6 0.6 10.8 Q0.8 7.6 4 7.2 Q5.4 2 10.6 2 Q14.6 2.2 16 6 Q20.6 6.4 20.6 10.6 Q20.4 14.6 16.4 14.8Z" fill="#1b8fe3"/><path d="M4 7.2 Q5.4 2 10.6 2 Q14.6 2.2 16 6 L9 10.4Z" fill="#0c6fcf"/><path d="M9 10.4 L16 6 Q20.6 6.4 20.6 10.6 Q20.4 14.6 16.4 14.8 H9Z" fill="#35b4f0"/><path d="M1.8 0.6 L18.8 17.2" stroke="#8c8c8c" stroke-width="1.5"/></svg>
<div class="t " style="left:1637.39px;top:1034.00px;font-size:14.00px;color:#1a1a1a;letter-spacing:-0.783px;">POR</div>
<div class="t " style="left:1635.09px;top:1054.00px;font-size:14.00px;color:#1a1a1a;letter-spacing:-0.706px;">PTB2</div>
<svg style="left:1688px;top:1040px" width="21" height="20"><g fill="none" stroke="#1a1a1a" stroke-linecap="round" stroke-linejoin="round" stroke-width="1.3"><path d="M13.2 0.9 H2.2 Q0.9 0.9 0.9 2.2 V13.8 Q0.9 15.1 2.2 15.1 H15.6"/><path d="M5.6 15.3 V18.7 M11.4 15.3 V18.7 M3.6 19.2 H13.2"/><rect x="15.2" y="0.7" width="4.4" height="7.2" rx="1.2"/><path d="M15.4 3.2 H19.4 M17.4 8 V19.4"/></g></svg>
<svg style="left:1717.6px;top:1043px" width="20" height="14"><g fill="none" stroke="#1a1a1a" stroke-linecap="round" stroke-linejoin="round" stroke-width="1.3"><path d="M0.8 4.4 H3.4 L8.4 0.7 V13.3 L3.4 9.6 H0.8Z"/><path d="M12.6 4 L18.6 10 M18.6 4 L12.6 10"/></g></svg>
<svg style="left:1747.6px;top:1040px" width="21" height="17"><path d="M6.9 4.75 H14.9 Q17.3 4.75 17.3 7.1 V12.8 Q17.3 15.15 14.9 15.15 H3.1 Q0.75 15.15 0.75 12.8 V8" fill="none" stroke="#1a1a1a" stroke-linecap="round" stroke-linejoin="round" stroke-width="1.3"/><path d="M17.9 8 Q20.4 8.2 20.4 9.9 Q20.4 11.6 17.9 11.8Z" fill="#1a1a1a"/><path d="M7.3 6.6 H13.3 Q14.3 6.6 14.3 7.5 V12.5 Q14.3 13.4 13.3 13.4 H4.1 Q3.2 13.4 3.2 12.5 V12 Z" fill="#1c1c1c"/><path d="M4.1 0 L1.2 5.8 H3.4 L2.4 10 L6.3 4 H4.3 L4.9 0Z" fill="#1a1a1a"/></svg>
<div class="t " style="left:1830.49px;top:1033.00px;font-size:14.30px;color:#1a1a1a;letter-spacing:0.064px;">12:00</div>
<div class="t " style="left:1788.99px;top:1053.00px;font-size:14.30px;color:#1a1a1a;letter-spacing:0.504px;">01/01/2026</div>
<svg style="left:1876.5px;top:1041px" width="18" height="19" viewBox="0 0 18 19"><path d="M8.4 0.8 Q12.6 0.9 13.4 5.4 L14.2 11 L16.6 13.6 Q16.8 14.6 15.8 14.6 H1.2 Q0.2 14.6 0.4 13.6 L2.8 11 L3.6 5.4 Q4.4 0.9 8.4 0.8Z" fill="#141414"/><path d="M5.6 16 H11.4 Q10.6 18.2 8.5 18.2 Q6.4 18.2 5.6 16Z" fill="#141414"/><path d="M5.4 6.4 H9.8 V7.6 L7 10.6 H10 V12 H5.2 V10.8 L8 7.8 H5.4Z" fill="#d5dbe8"/><path d="M11.6 0.4 H16.8 V1.6 L13.6 5 H17 V6.4 H11.4 V5.2 L14.6 1.8 H11.6Z" fill="#141414" stroke="#d5dbe8" stroke-width="0.5"/></svg>
</body>
</html>
